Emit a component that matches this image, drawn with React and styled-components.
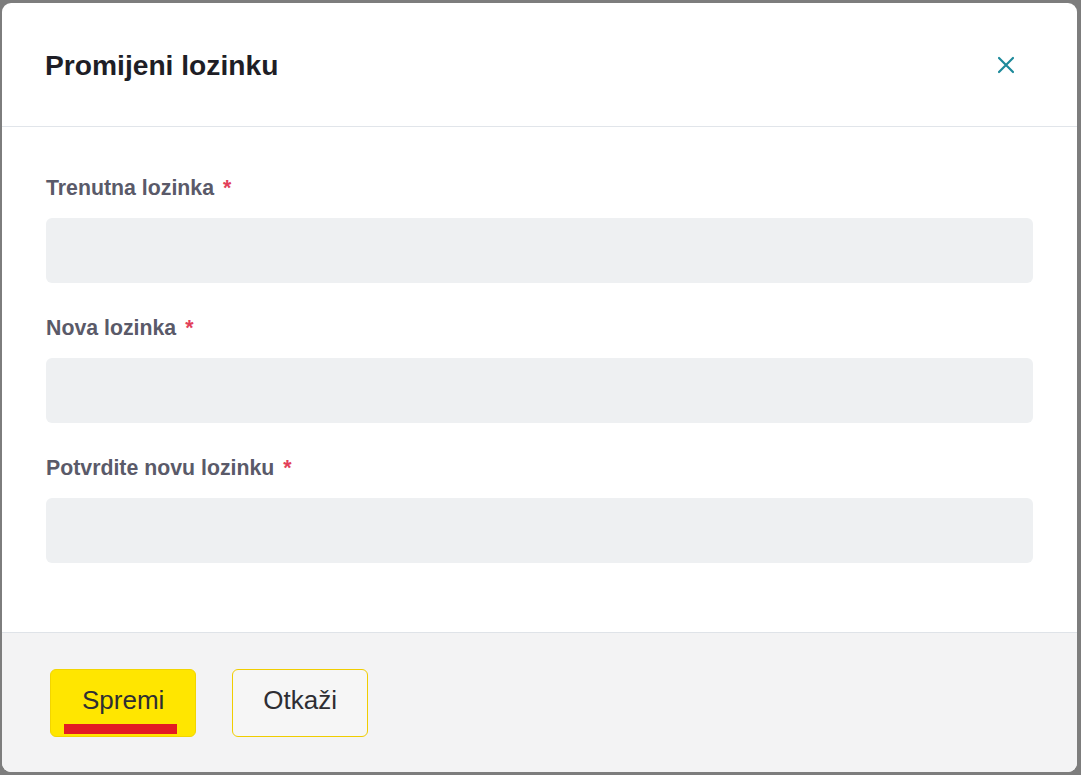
import React from 'react';
import styled, { createGlobalStyle } from 'styled-components';

const GlobalStyle = createGlobalStyle`
  html, body {
    margin: 0;
    padding: 0;
    background: #7d7d7d;
  }
  body {
    font-family: "Liberation Sans", Arial, sans-serif;
  }
`;

const fields = [
  { id: 'current', label: 'Trenutna lozinka' },
  { id: 'new', label: 'Nova lozinka' },
  { id: 'confirm', label: 'Potvrdite novu lozinku' },
];

const CloseIcon = () => (
  <svg width="18" height="18" viewBox="0 0 18 18" fill="none">
    <path d="M2 2L16 16M16 2L2 16" stroke="#1e8a9b" strokeWidth="2.2" strokeLinecap="round" />
  </svg>
);

const App = () => (
  <>
    <GlobalStyle />
    <Dialog>
      <Header>
        <Title>Promijeni lozinku</Title>
        <CloseButton aria-label="Zatvori">
          <CloseIcon />
        </CloseButton>
      </Header>

      <Body>
        {fields.map(field => (
          <Field key={field.id}>
            <Label htmlFor={field.id}>
              {field.label}
              <Required>*</Required>
            </Label>
            <Input id={field.id} type="password" />
          </Field>
        ))}
      </Body>

      <Footer>
        <Button $primary>Spremi</Button>
        <Button>Otkaži</Button>
      </Footer>
    </Dialog>
  </>
);

const Dialog = styled.div`
  margin: 3px 4px 3px 2px;
  height: 769px;
  background: #fff;
  border-radius: 9px;
  overflow: hidden;
  display: flex;
  flex-direction: column;
  box-sizing: border-box;
`;

const Header = styled.div`
  height: 124px;
  display: flex;
  align-items: center;
  justify-content: space-between;
  padding: 0 49px 0 43px;
  border-bottom: 1px solid #e1e5ea;
  box-sizing: border-box;
`;

const Title = styled.h2`
  margin: 0;
  font-size: 28.2px;
  line-height: 32px;
  font-weight: 700;
  color: #1e1e26;
`;

const CloseButton = styled.button`
  width: 44px;
  height: 44px;
  padding: 0;
  border: none;
  background: transparent;
  display: flex;
  align-items: center;
  justify-content: center;
  cursor: pointer;
`;

const Body = styled.div`
  flex: 1;
  display: flex;
  flex-direction: column;
  gap: 33px;
  padding: 49px 44px 0 44px;
`;

const Field = styled.div`
  display: flex;
  flex-direction: column;
`;

const Label = styled.label`
  font-size: 21.3px;
  line-height: 24px;
  font-weight: 700;
  color: #5a5a69;
  margin-bottom: 18px;
`;

const Required = styled.span`
  color: #e2405a;
  margin-left: 9px;
`;

const Input = styled.input`
  height: 65px;
  border: none;
  border-radius: 6px;
  background: #eef0f2;
  padding: 0 16px;
  font-size: 20px;
  outline: none;
`;

const Footer = styled.div`
  height: 140px;
  display: flex;
  align-items: center;
  gap: 36px;
  padding: 0 48px;
  background: #f3f3f4;
  border-top: 1px solid #dfe3e8;
  box-sizing: border-box;
`;

const Button = styled.button`
  position: relative;
  height: 68px;
  padding: 0 ${p => (p.$primary ? '31px' : '30px')} 4px;
  border-radius: 6px;
  border: ${p => (p.$primary ? '1px solid #f2d500' : '1.5px solid #f0cd00')};
  background: ${p => (p.$primary ? '#ffe600' : '#f6f6f6')};
  font-family: "Liberation Sans", Arial, sans-serif;
  font-size: 26px;
  color: #2e2e33;
  cursor: pointer;

  ${p => p.$primary && `
    &::after {
      content: '';
      position: absolute;
      left: 13px;
      right: 18px;
      bottom: 2px;
      height: 10px;
      background: #e31b23;
    }
  `}
`;

export default App;
